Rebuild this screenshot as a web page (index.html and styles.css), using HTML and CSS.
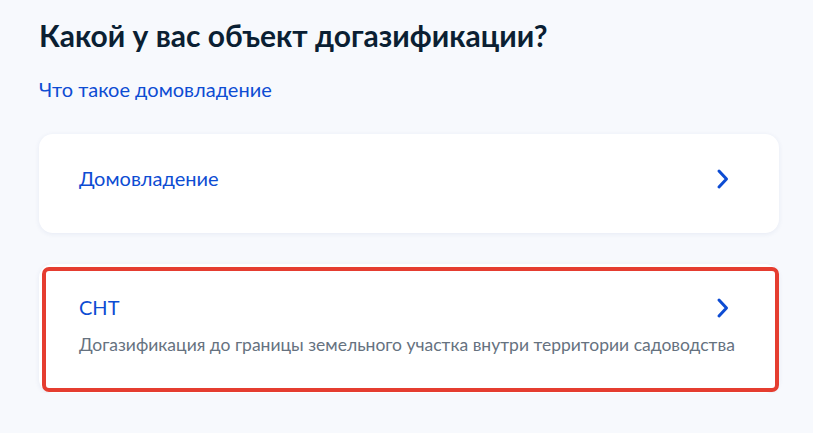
FILE: index.html
```html
<!DOCTYPE html>
<html lang="ru">
<head>
<meta charset="utf-8">
<title>Объект догазификации</title>
<link rel="stylesheet" href="styles.css">
</head>
<body>
<main class="page">
  <h1 class="title">Какой у вас объект догазификации?</h1>
  <a class="help-link" href="#">Что такое домовладение</a>
  <div class="options">
    <a class="option" href="#">
      <div class="option-head">
        <div class="option-title">Домовладение</div>
        <svg class="chevron" viewBox="0 0 14 22" width="14" height="22"><path d="M3 3 L10.5 11 L3 19" fill="none" stroke="#0d4cd3" stroke-width="3" stroke-linecap="round" stroke-linejoin="round"/></svg>
      </div>
    </a>
    <a class="option option-tall" href="#">
      <div class="option-head">
        <div class="option-title">СНТ</div>
        <svg class="chevron" viewBox="0 0 14 22" width="14" height="22"><path d="M3 3 L10.5 11 L3 19" fill="none" stroke="#0d4cd3" stroke-width="3" stroke-linecap="round" stroke-linejoin="round"/></svg>
      </div>
      <div class="option-desc">Догазификация до границы земельного участка внутри территории садоводства</div>
      <span class="highlight"></span>
    </a>
  </div>
</main>
</body>
</html>
```
FILE: styles.css
```css
html, body {
  margin: 0;
  padding: 0;
  background: #f7f9fd;
}
body {
  font-family: Lato, "Noto Sans", sans-serif;
  color: #0b1f33;
}
.page {
  padding: 15px 34px 0 39px;
  display: flex;
  flex-direction: column;
}
.title {
  margin: 0;
  font-size: 30px;
  font-weight: 700;
  line-height: 40px;
  color: #0b1f33;
}
.help-link {
  margin-top: 20px;
  font-size: 20px;
  line-height: 28px;
  color: #0d4cd3;
  text-decoration: none;
  align-self: flex-start;
}
.options {
  margin-top: 31px;
  display: flex;
  flex-direction: column;
  gap: 31px;
}
.option {
  position: relative;
  display: flex;
  flex-direction: column;
  background: #fff;
  border-radius: 14px;
  box-shadow: 0 1px 5px rgba(40, 70, 140, 0.08);
  padding: 30px 49px 0 40px;
  height: 99px;
  box-sizing: border-box;
  text-decoration: none;
}
.option-tall {
  height: 129px;
  padding-top: 29px;
}
.option-head {
  display: flex;
  align-items: flex-start;
  justify-content: space-between;
}
.option-title {
  font-size: 20px;
  line-height: 28px;
  color: #0d4cd3;
}
.option-desc {
  margin-top: 12px;
  font-size: 17.5px;
  line-height: 24px;
  color: #66727f;
  white-space: nowrap;
}
.chevron {
  margin-top: 4px;
  flex: none;
}
.highlight {
  position: absolute;
  top: 3px;
  left: 3px;
  right: 0;
  bottom: 1px;
  border: 4px solid #e53d30;
  border-radius: 7px;
  pointer-events: none;
}
```
